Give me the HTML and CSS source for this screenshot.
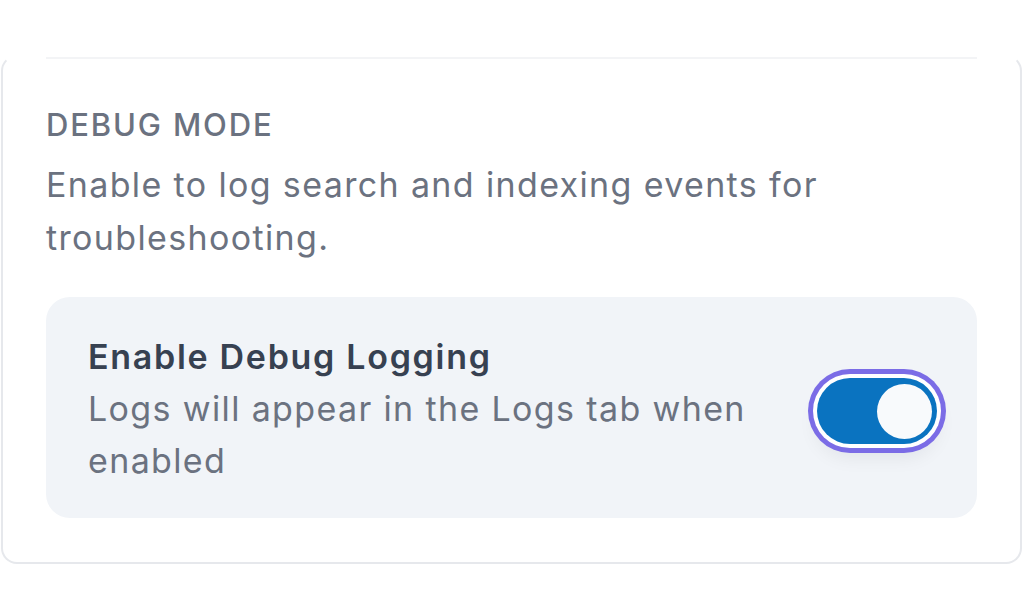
FILE: index.html
```html
<!DOCTYPE html>
<html lang="en">

<head>
    <meta charset="UTF-8">
    <meta name="viewport" content="width=device-width, initial-scale=1.0">
    <title>Debug Settings</title>
    <link rel="stylesheet" href="styles.css">
</head>

<body>
    <div class="card">
        <!-- Debug section -->
        <section class="section">
            <h3 class="section-label">Debug Mode</h3>
            <p class="section-desc">Enable to log search and indexing events for troubleshooting.</p>

            <div class="setting-row">
                <div class="setting-text">
                    <div class="setting-title">Enable Debug Logging</div>
                    <div class="setting-help">Logs will appear in the Logs tab when enabled</div>
                </div>
                <label class="switch">
                    <input type="checkbox" checked>
                    <span class="track"><span class="knob"></span></span>
                </label>
            </div>
        </section>
    </div>
</body>

</html>
```

FILE: styles.css
```css
body {
    margin: 0;
    background-color: #ffffff;
    font-family: Inter, "Noto Sans", sans-serif;
}
.card {
    margin: 55px 2px 0 1px;
    padding: 0 43px 44px 43px;
    border: 2px solid #e6e8ec;
    border-top-color: transparent;
    border-radius: 16px;
    background-color: #ffffff;
}
.section {
    border-top: 2px solid #f3f4f6;
    padding-top: 46px;
}
.section-label {
    margin: 0;
    font-size: 31px;
    line-height: 40px;
    font-weight: 500;
    letter-spacing: 0.06em;
    text-transform: uppercase;
    color: #6b7280;
}
.section-desc {
    margin: 13px 0 0 0;
    font-size: 34px;
    line-height: 53px;
    letter-spacing: 0.04em;
    color: #6b7280;
}
.setting-row {
    display: flex;
    align-items: center;
    margin-top: 33px;
    padding: 38px 40px 31px 42px;
    background-color: #f1f4f8;
    border-radius: 24px;
}
.setting-text {
    flex: 1;
    padding-right: 60px;
}
.setting-title {
    font-size: 34px;
    line-height: 44px;
    font-weight: 600;
    letter-spacing: 0.05em;
    color: #374151;
}
.setting-help {
    margin-top: 4px;
    font-size: 34px;
    line-height: 52px;
    letter-spacing: 0.04em;
    color: #6b7280;
}
.switch {
    display: block;
    flex-shrink: 0;
}
.switch input {
    display: none;
}
.track {
    display: flex;
    justify-content: flex-end;
    align-items: center;
    box-sizing: border-box;
    width: 120px;
    height: 66px;
    padding: 0 5px;
    border-radius: 33px;
    background-color: #0a73c0;
    box-shadow: 0 0 0 4px #ffffff, 0 0 0 9px #7b6ce6, 0 12px 20px rgba(15, 23, 42, 0.08);
}
.knob {
    width: 55px;
    height: 55px;
    border-radius: 50%;
    background-color: #f8fafc;
}
```
